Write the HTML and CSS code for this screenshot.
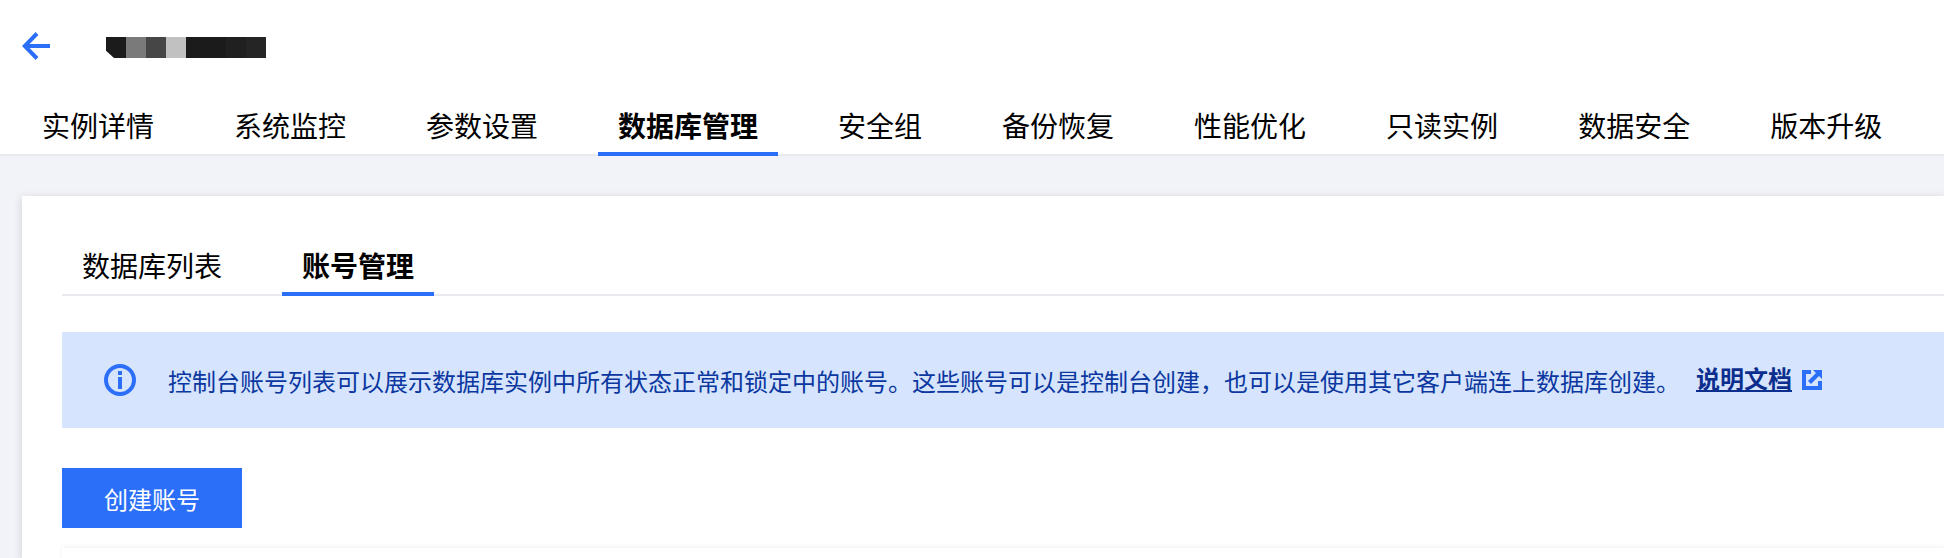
FILE: index.html
```html
<!DOCTYPE html>
<html lang="zh-CN">
<head>
  <meta charset="UTF-8">
  <title>数据库管理</title>
  <link rel="stylesheet" href="styles.css">
</head>
<body>
  <!-- Page header -->
  <div class="page-header">
    <div class="title-row">
      <svg class="back-icon" viewBox="0 0 28 28" width="28" height="28" fill="none" stroke="#2b6ff8" stroke-width="4">
        <path d="M15 1.5L2.8 14L15 26.5"/>
        <path d="M3 14H28"/>
      </svg>
      <div class="masked-name">
        <i class="mask-first"></i><i class="mask-b"></i><i class="mask-c"></i><i class="mask-d"></i><i class="mask-e"></i><i class="mask-e"></i><i class="mask-f"></i><i class="mask-g"></i>
      </div>
    </div>
    <div class="main-tabs">
      <a class="main-tab">实例详情</a>
      <a class="main-tab">系统监控</a>
      <a class="main-tab">参数设置</a>
      <a class="main-tab active">数据库管理</a>
      <a class="main-tab">安全组</a>
      <a class="main-tab">备份恢复</a>
      <a class="main-tab">性能优化</a>
      <a class="main-tab">只读实例</a>
      <a class="main-tab">数据安全</a>
      <a class="main-tab">版本升级</a>
    </div>
  </div>

  <!-- Card -->
  <div class="content">
    <div class="card">
      <div class="sub-tabs">
        <a class="sub-tab">数据库列表</a>
        <a class="sub-tab active">账号管理</a>
      </div>

      <div class="notice">
        <svg class="info-icon" viewBox="0 0 32 32" width="32" height="32">
          <circle cx="16" cy="16" r="14" fill="none" stroke="#2b6ff8" stroke-width="4"/>
          <rect x="14" y="7" width="4" height="4" fill="#2b6ff8"/>
          <rect x="14" y="13" width="4" height="12" fill="#2b6ff8"/>
        </svg>
        <span class="notice-text">控制台账号列表可以展示数据库实例中所有状态正常和锁定中的账号。这些账号可以是控制台创建，也可以是使用其它客户端连上数据库创建。</span>
        <a class="notice-link">说明文档</a>
        <svg class="link-icon" viewBox="0 0 20 20" width="20" height="20">
          <path fill="#2b6ff8" d="M0 0H9V4H4V16H16V11H20V20H0Z"/>
          <path fill="#2b6ff8" d="M11 0H20V9L17 6L9 14L6 11L14 3Z"/>
        </svg>
      </div>

      <button class="primary-btn">创建账号</button>
      <div class="table-top"></div>
    </div>
  </div>
</body>
</html>
```

FILE: styles.css
```css
html,
body {
  height: 558px;
  overflow: hidden;
}

body {
  margin: 0;
  background: #f2f3f8;
  font-family: "Liberation Sans", "Noto Sans CJK SC", sans-serif;
  color: #000;
}

.page-header {
  background: #fff;
  height: 154px;
  border-bottom: 2px solid #e7eaef;
  display: flex;
  flex-direction: column;
}

.title-row {
  display: flex;
  align-items: center;
  height: 28px;
  padding: 32px 0 0 22px;
}

.back-icon {
  display: block;
}

.masked-name {
  display: flex;
  height: 21px;
  margin-left: 56px;
  margin-top: 3px;
}

.masked-name i {
  display: block;
  width: 20px;
}

.mask-first {
  background: #1b1b1b;
  clip-path: polygon(0 0, 100% 0, 100% 100%, 40% 100%, 0 65%);
}
.mask-b { background: #7a7a7a; }
.mask-c { background: #464646; }
.mask-d { background: #c1c1c1; }
.mask-e { background: #1b1b1b; }
.mask-f { background: #202020; }
.mask-g { background: #252525; }

.main-tabs {
  display: flex;
  gap: 40px;
  margin: auto 0 -2px 22px;
}

.main-tab {
  font-size: 28px;
  line-height: 40px;
  padding: 0 20px 4px;
  border-bottom: 4px solid transparent;
}

.main-tab.active,
.sub-tab.active {
  font-weight: bold;
  border-bottom-color: #2b6ff8;
}

.content {
  padding: 40px 0 0 22px;
}

.card {
  background: #fff;
  box-shadow: 0 2px 8px rgba(54, 58, 80, 0.2);
  padding: 40px 0 0 40px;
  height: 322px;
}

.sub-tabs {
  display: flex;
  gap: 40px;
  height: 54px;
  border-bottom: 2px solid #e9e9f0;
  padding-top: 4px;
}

.sub-tab {
  font-size: 28px;
  line-height: 40px;
  padding: 8px 20px 0;
  height: 44px;
  border-bottom: 4px solid transparent;
}

.notice {
  display: flex;
  align-items: center;
  height: 96px;
  margin-top: 36px;
  padding-left: 42px;
  background: #d6e5fd;
  color: #0b37a0;
  font-size: 24px;
}

.notice-text {
  margin-left: 32px;
  white-space: nowrap;
}

.notice-link {
  margin-left: 16px;
  font-weight: bold;
  color: #0b2e8f;
  line-height: 32px;
  text-decoration: underline;
}

.link-icon {
  margin-left: 10px;
}

.primary-btn {
  display: block;
  width: 180px;
  height: 60px;
  margin-top: 40px;
  border: 0;
  padding: 0;
  background: #2b6ff8;
  color: #fff;
  font-family: inherit;
  font-size: 24px;
}

.table-top {
  height: 10px;
  margin-top: 20px;
  background: #fff;
  box-shadow: 0 -1px 4px rgba(54, 58, 80, 0.08);
}
```
